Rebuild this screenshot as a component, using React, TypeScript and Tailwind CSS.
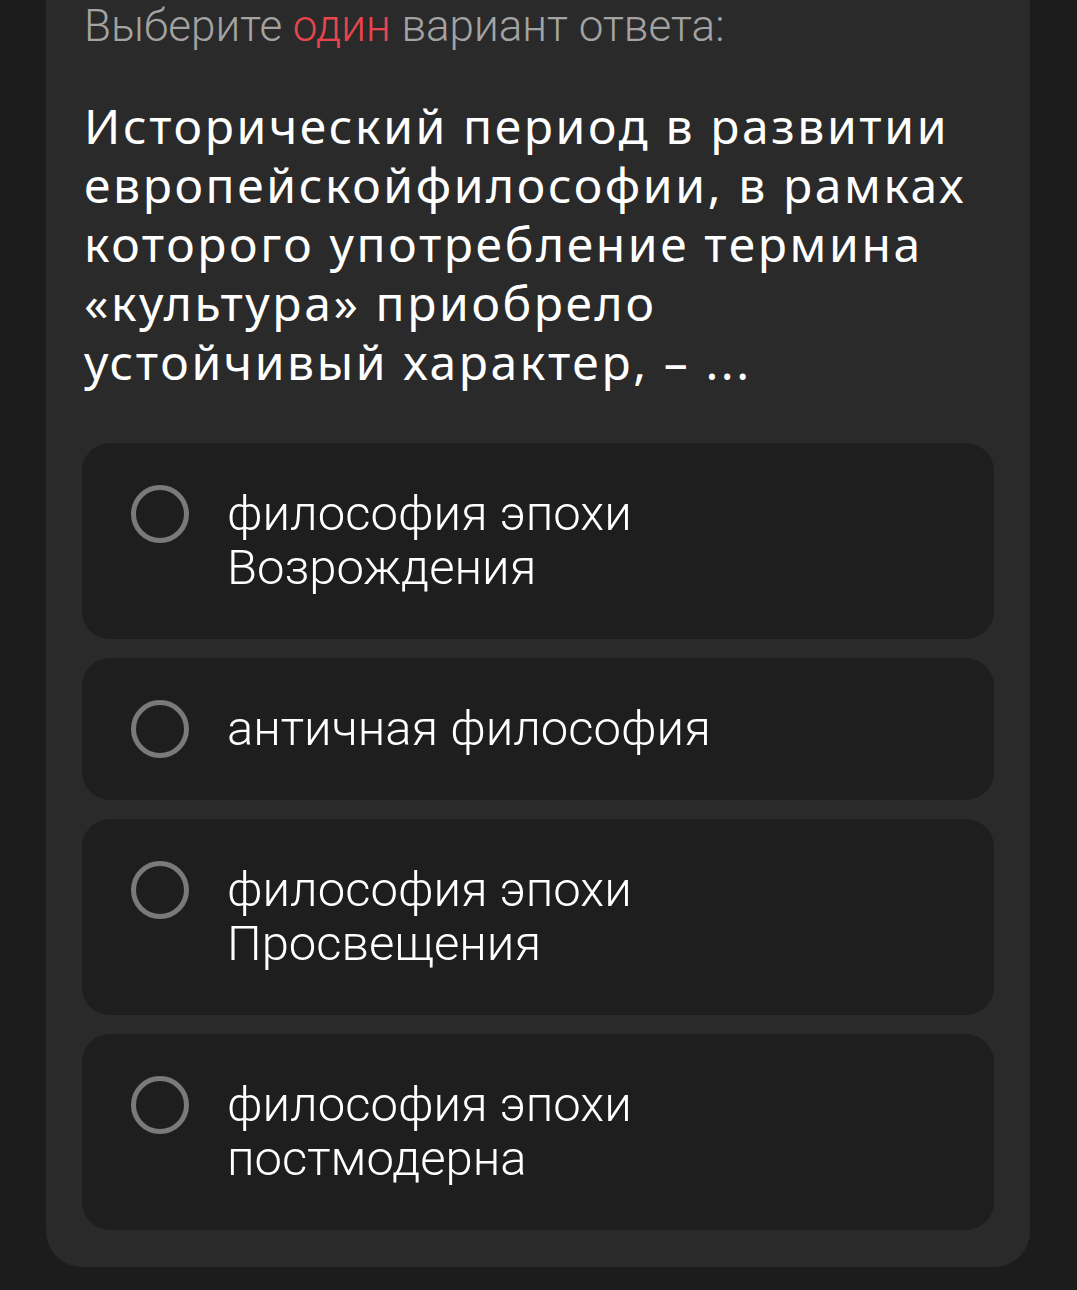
import React from 'react';

const options = [
  ['философия эпохи', 'Возрождения'],
  ['античная философия'],
  ['философия эпохи', 'Просвещения'],
  ['философия эпохи', 'постмодерна'],
];

export default function App() {
  return (
    <div className="min-h-[1290px] w-[1077px] bg-[#1c1c1c] overflow-hidden">
      <div className="ml-[46px] w-[984px] rounded-b-[36px] bg-[#2a2a2a] px-[36px] pb-[37px]">
        {/* Header */}
        <div
          className="pl-[2px] pt-[2px] text-[44px] leading-[48px] font-light text-[#a3a3a3]"
          style={{ fontFamily: 'Roboto, sans-serif' }}
        >
          Выберите <span className="text-[#e8464e]">один</span> вариант ответа:
        </div>

        {/* Question */}
        <div
          className="mt-[46px] pl-[2px] text-[48px] leading-[59px] tracking-[2.6px] text-white"
          style={{ fontFamily: '"Noto Sans", sans-serif' }}
        >
          Исторический период в развитии
          <br />
          европейскойфилософии, в рамках
          <br />
          которого употребление термина
          <br />
          «культура» приобрело
          <br />
          устойчивый характер, – ...
        </div>

        {/* Options */}
        <div className="mt-[52px] flex flex-col gap-[19px]">
          {options.map((lines, i) => (
            <div key={i} className="flex items-start rounded-[28px] bg-[#1e1e1e] py-[44px] pl-[49px] pr-8">
              <div className="flex h-[54px] items-center">
                <div className="h-[58px] w-[58px] rounded-full border-[5px] border-[#7a7a7a]" />
              </div>
              <div
                className="ml-[38px] text-[49px] leading-[54px] font-light text-white"
                style={{ fontFamily: 'Roboto, sans-serif' }}
              >
                {lines.map((l, j) => (
                  <div key={j}>{l}</div>
                ))}
              </div>
            </div>
          ))}
        </div>
      </div>
    </div>
  );
}
